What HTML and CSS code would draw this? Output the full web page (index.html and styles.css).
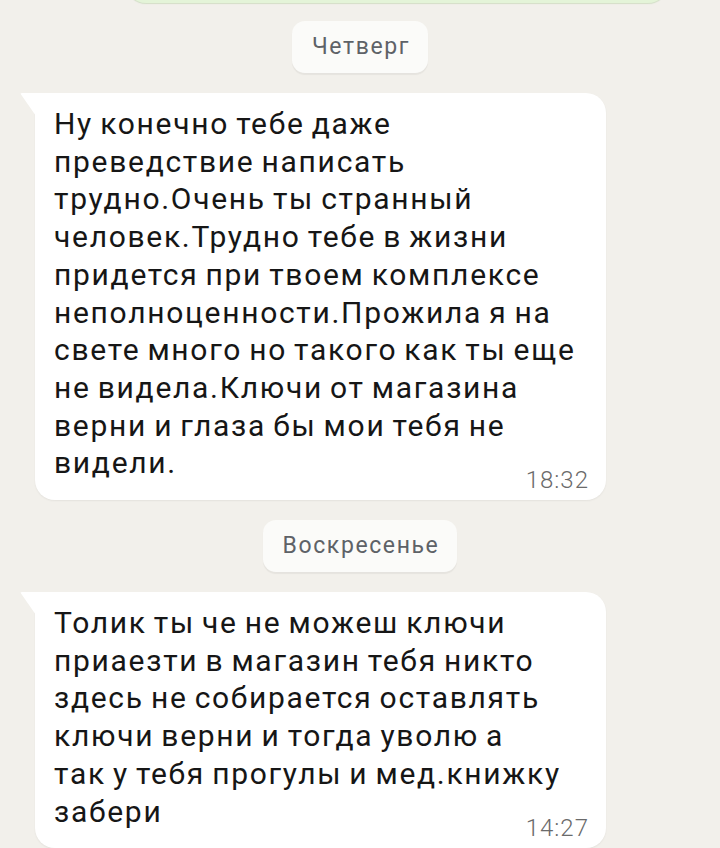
FILE: index.html
```html
<!DOCTYPE HTML>
<html>
<head>
    <meta charset="UTF-8">
    <title>Чат</title>
    <link rel="stylesheet" href="styles.css">
</head>
<body>
    <div id="chat">
        <div class="msg out"></div>

        <p class="day">Четверг</p>

        <div class="msg in">
            <p class="text">Ну конечно тебе даже<br>преведствие написать<br>трудно.Очень ты странный<br>человек.Трудно тебе в жизни<br>придется при твоем комплексе<br>неполноценности.Прожила я на<br>свете много но такого как ты еще<br>не видела.Ключи от магазина<br>верни и глаза бы мои тебя не<br>видели.</p>
            <p class="time">18:32</p>
        </div>

        <p class="day">Воскресенье</p>

        <div class="msg in">
            <p class="text">Толик ты че не можеш ключи<br>приаезти в магазин тебя никто<br>здесь не собирается оставлять<br>ключи верни и тогда уволю а<br>так у тебя прогулы и мед.книжку<br>забери</p>
            <p class="time">14:27</p>
        </div>
    </div>
</body>
</html>
```

FILE: styles.css
```css
html,body{margin:0;padding:0;}
body{
    background: #f2f0eb;
    font-family: Roboto,"Noto Sans",sans-serif;
    overflow: hidden;
}
p{margin:0;}

#chat{
    display: flex;
    flex-direction: column;
    height: 848px;
}

/* 日期 */
#chat .day{
    align-self: center;
    height: 52px;
    line-height: 52px;
    padding: 0 18px 0 20px;
    margin-bottom: 20px;
    border-radius: 13px;
    background: #fbfbf9;
    box-shadow: 0 2px 1px rgba(0,0,0,.05);
    color: #5e6267;
    font-size: 23px;
    letter-spacing: 1.6px;
}

/* 消息 */
#chat .msg{
    flex: none;
    background: #fff;
    border-radius: 0 20px 20px 20px;
    box-shadow: 0 1px 2px rgba(0,0,0,.06);
}
#chat .msg.out{
    align-self: flex-end;
    width: 542px;
    height: 60px;
    margin: -57px 52px 18px 0;
    border-radius: 20px;
    background: #e4f4d8;
    box-shadow: 0 1px 1px rgba(120,170,90,.25);
}
#chat .msg.in{
    position: relative;
    width: 571px;
    margin: 0 0 20px 35px;
    padding: 12px 17px 8px 19px;
    box-sizing: border-box;
}
#chat .msg.in::before{
    content: "";
    position: absolute;
    left: -15px;
    top: 0;
    width: 16px;
    height: 23px;
    background: #fff;
    clip-path: polygon(0 0,100% 0,100% 100%);
    border-top-left-radius: 2px;
}
#chat .text{
    font-size: 30px;
    line-height: 37.7px;
    letter-spacing: 1.7px;
    word-spacing: -2px;
    color: #161616;
}
#chat .time{
    margin-top: -14px;
    line-height: 24px;
    font-size: 24px;
    font-weight: 300;
    letter-spacing: 1px;
    text-align: right;
    color: #6a6a6a;
}
```
